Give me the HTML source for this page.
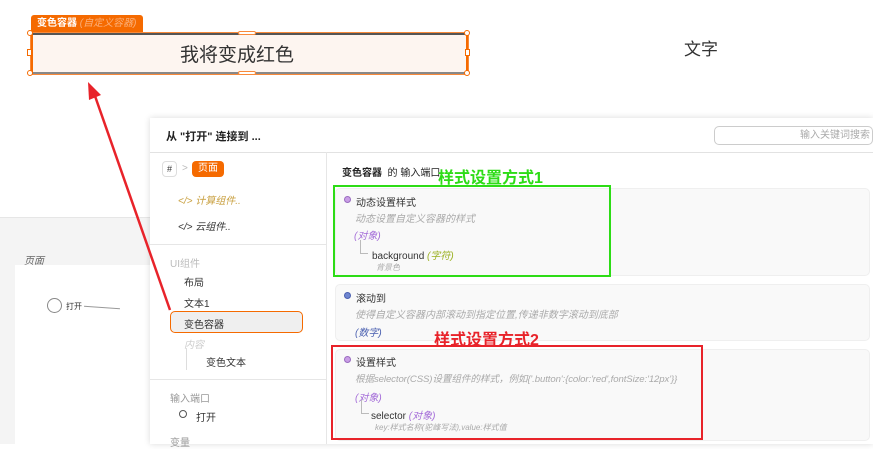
<!DOCTYPE html>
<html><head><meta charset="utf-8"><style>
*{margin:0;padding:0;box-sizing:border-box}
body{width:873px;height:444px;overflow:hidden;position:relative;background:#fff;font-family:"Liberation Sans","Noto Sans CJK SC",sans-serif;color:#333}
.a{position:absolute}
.t{font-size:10px;white-space:nowrap}
.i{font-style:italic}
</style></head><body>
<div class="a" style="left:0;top:217px;width:873px;height:227px;background:#f4f4f4;border-top:1px solid #e6e6e6"></div>
<div class="a t i" style="left:24px;top:252px;color:#666">页面</div>
<div class="a" style="left:15px;top:265px;width:140px;height:179px;background:#fff"></div>
<div class="a" style="left:47px;top:298px;width:15px;height:15px;border:1px solid #888;border-radius:50%"></div>
<div class="a t" style="left:66px;top:301px;font-size:8px">打开</div>
<div class="a" style="left:84px;top:307px;width:36px;height:1px;background:#999;transform:rotate(4deg)"></div>

<div class="a" style="left:31px;top:15px;width:112px;height:18px;background:#f56a00;border-radius:3px 3px 0 0"></div>
<div class="a t" style="left:37px;top:15px;line-height:18px;color:#fff;font-weight:bold;font-size:10px">变色容器 <span style="font-weight:normal;font-style:italic;color:#fbb07a">(自定义容器)</span></div>
<div class="a" style="left:31px;top:33px;width:437px;height:41px;background:#fdf5f0;border:2px solid #555;border-color:#555 #f56a00 #888 #f56a00;outline:1px solid #f98a3a"></div>
<div class="a" style="left:180px;top:40px;font-size:19px;color:#333">我将变成红色</div>
<div class="a" style="left:238px;top:31px;width:18px;height:4px;background:#fff;border:1px solid #f98a3a;border-radius:2px"></div>
<div class="a" style="left:238px;top:71px;width:18px;height:4px;background:#fff;border:1px solid #f98a3a;border-radius:2px"></div>
<div class="a" style="left:27px;top:30px;width:6px;height:6px;background:#fff;border:1px solid #f56a00;border-radius:50%"></div>
<div class="a" style="left:464px;top:30px;width:6px;height:6px;background:#fff;border:1px solid #f56a00;border-radius:50%"></div>
<div class="a" style="left:27px;top:70px;width:6px;height:6px;background:#fff;border:1px solid #f56a00;border-radius:50%"></div>
<div class="a" style="left:464px;top:70px;width:6px;height:6px;background:#fff;border:1px solid #f56a00;border-radius:50%"></div>
<div class="a" style="left:27px;top:49px;width:5px;height:7px;background:#fff;border:1px solid #f56a00"></div>
<div class="a" style="left:465px;top:49px;width:5px;height:7px;background:#fff;border:1px solid #f56a00"></div>
<div class="a" style="left:684px;top:35px;font-size:17px;color:#333">文字</div>

<div class="a" style="left:150px;top:118px;width:723px;height:326px;background:#fff;box-shadow:0 0 6px rgba(0,0,0,.15)"></div>
<div class="a" style="left:150px;top:152px;width:723px;height:1px;background:#e2e2e2"></div>
<div class="a" style="left:326px;top:152px;width:1px;height:292px;background:#e6e6e6"></div>
<div class="a t" style="left:166px;top:128px;font-size:11px;font-weight:bold;color:#222">从 "打开" 连接到 ...</div>
<div class="a" style="left:714px;top:126px;width:159px;height:19px;border:1px solid #ccc;border-radius:5px"></div>
<div class="a t" style="left:800px;top:126px;line-height:19px;color:#aaa">输入关键词搜索</div>

<div class="a" style="left:162px;top:161px;width:15px;height:16px;border:1px solid #ddd;border-radius:4px;font-size:9px;text-align:center;line-height:14px">#</div>
<div class="a t" style="left:182px;top:163px;color:#bbb">&gt;</div>
<div class="a t" style="left:192px;top:161px;width:32px;height:16px;background:#f56a00;color:#fff;border-radius:4px;text-align:center;line-height:16px">页面</div>
<div class="a t i" style="left:178px;top:192px;color:#c9a040">&lt;/&gt; 计算组件..</div>
<div class="a t i" style="left:178px;top:218px;color:#333">&lt;/&gt; 云组件..</div>
<div class="a" style="left:150px;top:244px;width:176px;height:1px;background:#e6e6e6"></div>
<div class="a t" style="left:170px;top:255px;color:#bbb">UI组件</div>
<div class="a t" style="left:184px;top:274px">布局</div>
<div class="a t" style="left:184px;top:295px">文本1</div>
<div class="a" style="left:170px;top:311px;width:133px;height:22px;background:#efefef;border:1px solid #f56a00;border-radius:5px"></div>
<div class="a t" style="left:184px;top:316px">变色容器</div>
<div class="a t i" style="left:184px;top:336px;color:#ccc">内容</div>
<div class="a" style="left:186px;top:348px;width:1px;height:22px;background:#ddd"></div>
<div class="a t" style="left:206px;top:354px">变色文本</div>
<div class="a" style="left:150px;top:379px;width:176px;height:1px;background:#e6e6e6"></div>
<div class="a t" style="left:170px;top:390px;color:#999">输入端口</div>
<div class="a" style="left:179px;top:410px;width:8px;height:8px;border:1px solid #555;border-radius:50%"></div>
<div class="a t" style="left:196px;top:409px">打开</div>
<div class="a t" style="left:170px;top:434px;color:#999">变量</div>

<div class="a t" style="left:342px;top:164px;font-weight:bold;color:#222">变色容器 <span style="font-weight:normal">&nbsp;的 输入端口</span></div>

<div class="a" style="left:335px;top:188px;width:535px;height:88px;background:#f9f9f9;border:1px solid #efefef;border-radius:5px"></div>
<div class="a" style="left:335px;top:284px;width:535px;height:57px;background:#f9f9f9;border:1px solid #efefef;border-radius:5px"></div>
<div class="a" style="left:335px;top:349px;width:535px;height:92px;background:#f9f9f9;border:1px solid #efefef;border-radius:5px"></div>

<div class="a" style="left:344px;top:196px;width:7px;height:7px;background:#c99ee6;border:1px solid #9a6cc0;border-radius:50%"></div>
<div class="a t" style="left:356px;top:194px">动态设置样式</div>
<div class="a t i" style="left:355px;top:210px;color:#aaa">动态设置自定义容器的样式</div>
<div class="a t i" style="left:354px;top:227px;color:#a36bd8">(对象)</div>
<div class="a" style="left:360px;top:240px;width:8px;height:14px;border-left:1px solid #bbb;border-bottom:1px solid #bbb"></div>
<div class="a t" style="left:372px;top:247px">background <span class="i" style="color:#9ab020">(字符)</span></div>
<div class="a t i" style="left:376px;top:262px;font-size:8px;color:#aaa">背景色</div>

<div class="a" style="left:344px;top:292px;width:7px;height:7px;background:#6f86d0;border:1px solid #4a60b0;border-radius:50%"></div>
<div class="a t" style="left:356px;top:290px">滚动到</div>
<div class="a t i" style="left:355px;top:306px;color:#aaa">使得自定义容器内部滚动到指定位置,传递非数字滚动到底部</div>
<div class="a t i" style="left:355px;top:324px;color:#4a60b0">(数字)</div>

<div class="a" style="left:344px;top:356px;width:7px;height:7px;background:#c99ee6;border:1px solid #9a6cc0;border-radius:50%"></div>
<div class="a t" style="left:356px;top:354px">设置样式</div>
<div class="a t i" style="left:355px;top:371px;color:#aaa;font-size:9.6px;letter-spacing:-0.1px">根据selector(CSS)设置组件的样式，例如{'.button':{color:'red',fontSize:'12px'}}</div>
<div class="a t i" style="left:355px;top:389px;color:#a36bd8">(对象)</div>
<div class="a" style="left:361px;top:400px;width:8px;height:14px;border-left:1px solid #bbb;border-bottom:1px solid #bbb"></div>
<div class="a t" style="left:371px;top:407px">selector <span class="i" style="color:#a36bd8">(对象)</span></div>
<div class="a t i" style="left:375px;top:422px;font-size:8px;color:#aaa">key:样式名称(驼峰写法),value:样式值</div>

<div class="a" style="left:333px;top:185px;width:278px;height:92px;border:2px solid #2ddc16"></div>
<div class="a" style="left:438px;top:164px;font-size:16px;font-weight:bold;color:#2ddc16">样式设置方式1</div>
<div class="a" style="left:331px;top:345px;width:372px;height:95px;border:2px solid #e8232a"></div>
<div class="a" style="left:434px;top:326px;font-size:16px;font-weight:bold;color:#e8232a">样式设置方式2</div>

<svg class="a" style="left:0;top:0" width="873" height="444"><line x1="170" y1="310" x2="95" y2="96" stroke="#e8232a" stroke-width="2.5"/><polygon points="88,82 101,95 89,100" fill="#e8232a"/></svg>
</body></html>
